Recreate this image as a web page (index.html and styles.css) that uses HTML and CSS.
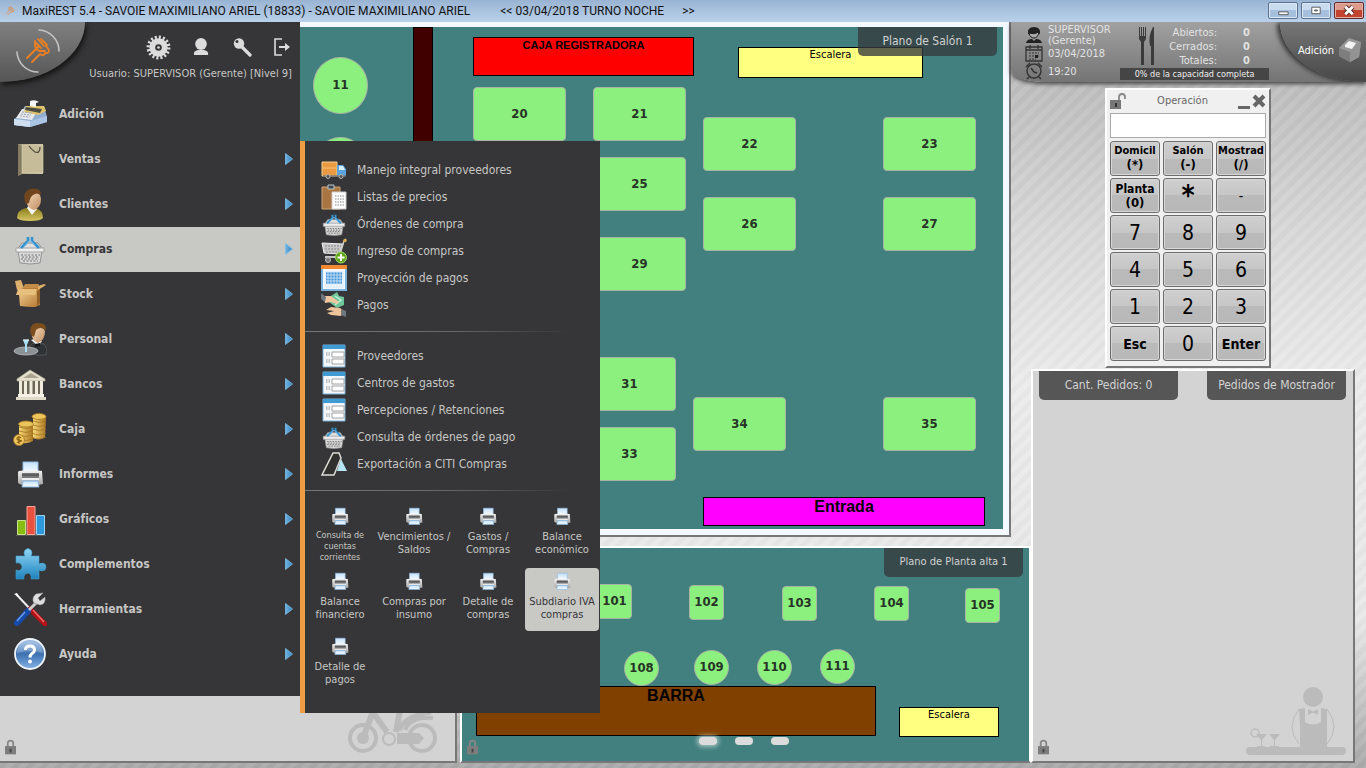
FILE: index.html
```html
<!DOCTYPE html>
<html lang="es">
<head>
  <meta charset="UTF-8">
  <title>MaxiREST 5.4</title>
  <link rel="stylesheet" href="styles.css">
</head>
<body>
  <!-- iconos -->
  <svg class="defs" aria-hidden="true">
    <defs>
      <linearGradient id="gBlue" x1="0" y1="0" x2="0" y2="1"><stop offset="0" stop-color="#8fd6f6"/><stop offset="1" stop-color="#1f83bd"/></linearGradient>
      <linearGradient id="gSky" x1="0" y1="0" x2="0" y2="1"><stop offset="0" stop-color="#c4e2fb"/><stop offset="1" stop-color="#fafdff"/></linearGradient>
      <linearGradient id="gArrow" x1="0" y1="0" x2="1" y2="0"><stop offset="0" stop-color="#6fb2e0"/><stop offset="1" stop-color="#3486c4"/></linearGradient>
      <linearGradient id="gPaper" x1="0" y1="0" x2="1" y2="0"><stop offset="0" stop-color="#9d947a"/><stop offset="1" stop-color="#cfc5a3"/></linearGradient>
      <linearGradient id="gSilver" x1="0" y1="0" x2="0" y2="1"><stop offset="0" stop-color="#f5f5f5"/><stop offset="1" stop-color="#a5a5a5"/></linearGradient>
      <linearGradient id="gGold" x1="0" y1="0" x2="1" y2="0"><stop offset="0" stop-color="#f6d877"/><stop offset="1" stop-color="#ab7620"/></linearGradient>
      <linearGradient id="gHelp" x1="0" y1="0" x2="0" y2="1"><stop offset="0" stop-color="#9dbfe6"/><stop offset=".5" stop-color="#3c70b0"/><stop offset="1" stop-color="#85b4e4"/></linearGradient>
      <linearGradient id="gSkin" x1="0" y1="0" x2="1" y2="1"><stop offset="0" stop-color="#f6dcbd"/><stop offset="1" stop-color="#c08c60"/></linearGradient>
      <linearGradient id="gShirt" x1="0" y1="0" x2="0" y2="1"><stop offset="0" stop-color="#8a7c1d"/><stop offset="1" stop-color="#d7c765"/></linearGradient>
      <linearGradient id="gBox" x1="0" y1="0" x2="1" y2="1"><stop offset="0" stop-color="#efc98b"/><stop offset="1" stop-color="#b67c36"/></linearGradient>
    </defs>
    <symbol id="arrow" viewBox="0 0 8 12"><path d="M.5.5 7.5 6 .5 11.5z" fill="url(#gArrow)" stroke="#7dbce6" stroke-width=".8"/></symbol>
    <symbol id="logo" viewBox="0 0 46 46">
      <g fill="none" stroke-linecap="round" stroke-linejoin="round">
        <path d="M24 2a21 21 0 0 1 20 21M2 24a21 21 0 0 0 21 20" stroke="#c4c4c4" stroke-width="1.6"/>
        <path d="M12 30 23 19M17 34l8-8q4 3 5-1 4 1 4-3l-3-4M20 13v5q1 4 5 5h5M23 11l6 7M20 14l6 6M26 11l6 6" stroke="#f0801f" stroke-width="1.8"/>
      </g>
    </symbol>
    <symbol id="gear" viewBox="0 0 24 24">
      <circle cx="12" cy="12" r="9.5" fill="none" stroke="#dcdcdc" stroke-width="4" stroke-dasharray="1.9 1.83"/>
      <circle cx="12" cy="12" r="8.800" fill="#dcdcdc"/><circle cx="12" cy="12" r="3.200" fill="#363638"/><circle cx="12" cy="12" r="1.300" fill="#dcdcdc"/>
    </symbol>
    <symbol id="user" viewBox="0 0 18 20"><ellipse cx="9" cy="7" rx="5.8" ry="6" fill="#dcdcdc"/><path d="M2 18q-1-4 4-5h6q5 1 4 5z" fill="#dcdcdc"/></symbol>
    <symbol id="key" viewBox="0 0 20 20"><path d="m9 9 9 9" stroke="#dcdcdc" stroke-width="3.2" stroke-linecap="round"/><circle cx="7" cy="6.5" r="5.2" fill="#dcdcdc"/><circle cx="5" cy="4.5" r="1.5" fill="#363638"/></symbol>
    <symbol id="exit" viewBox="0 0 18 20"><path d="M9 2H2v16h7" fill="none" stroke="#dcdcdc" stroke-width="1.6"/><path d="M6 9h6V6l5 4-5 4v-3H6z" fill="#dcdcdc"/></symbol>

    <symbol id="caja-reg" viewBox="0 0 34 34">
      <path d="M6 19 12 9h19l3 11v5l-17 5-16-2v-6z" fill="#92aed0"/>
      <path d="M1 22l16 2 17-5v6l-17 5-16-2z" fill="#a9c4e4"/><path d="M1 22l16 2v6L1 28z" fill="#cfdff0"/>
      <path d="M3 21 9 12l15 2-5 9z" fill="#e8eaec"/>
      <path d="M13 9h18l2 5-8 4-14-3z" fill="#dfc36b"/><path d="M13 10l16 2-2 4-15-3z" fill="#4c4d42"/>
      <path d="M17 9V4q5-2 9 1l-3 1v4z" fill="#f3f5f7"/>
      <g stroke="#a3acb5" stroke-width="1.2" stroke-dasharray="2 1"><path d="m9 15 10 1M8 17l10 1M7 19l10 1"/></g>
    </symbol>
    <symbol id="bolsa" viewBox="0 0 34 34">
      <path d="M5 2h25v30H9l-4 2z" fill="url(#gPaper)"/><path d="M5 2 9 4v27l-4 3z" fill="#847b61"/><path d="M9 3h21v28H9z" fill="#c6bc99" stroke="#dcd3b5" stroke-width=".6"/>
      <path d="M16 4q2 3 6 6 5 2 5-5" fill="none" stroke="#504c40" stroke-width="1.3"/>
    </symbol>
    <symbol id="cliente" viewBox="0 0 34 34">
      <path d="M4 31q0-8 9-10h9q8 2 8 10-2 3-13 3T4 31z" fill="url(#gShirt)"/>
      <path d="m14 21 5 7 5-6-2-4h-6z" fill="#f5f5f1"/>
      <path d="M13 11q1-6 8-6 7 1 7 7 0 9-7 11-5-1-7-6z" fill="url(#gSkin)"/>
      <path d="M12 15q-3-10 5-13 11-2 11 6-4-3-8 0-3 2-4 8l-3 1z" fill="#71451d"/>
    </symbol>
    <symbol id="canasta" viewBox="0 0 34 34">
      <path d="M4 18 9 11h16l5 7z" fill="#dedede" stroke="#929292"/><path d="M5 19h24l-2 12q-10 2-20 0z" fill="#dadada" stroke="#939393"/>
      <path d="M3 16h28v4H3z" fill="#eee" stroke="#a3a3a3"/>
      <path d="M8 23h19M9 25h17M8 27h18M10 29h15" stroke="#6f6f6f" stroke-width="1.2" stroke-dasharray="2 1.5"/>
      <path d="m8 16 7-7V5M26 16 19 9V5" stroke="#3492cf" stroke-width="2.6" fill="none"/><path d="m11 15 6-7 6 7" stroke="#8ac5eb" fill="none"/>
    </symbol>
    <symbol id="caja-carton" viewBox="0 0 34 34">
      <path d="M6 11h21v17l-5 2-15-1z" fill="#b77e39"/><path d="M6 15h18v14l-4 1-13-1z" fill="url(#gBox)"/><path d="m24 15 3-4v15l-3 3z" fill="#936128"/>
      <path d="m2 4 6-1 3 8-7 2z" fill="#ddb06c"/><path d="M12 7h14l-1 4H10z" fill="#c48c47"/><path d="m25 13 8-5-2-1-6 2z" fill="#dcae6a"/><path d="M5 12h19l-2 6H3z" fill="#e9bf7e"/>
    </symbol>
    <symbol id="mozo" viewBox="0 0 34 34">
      <path d="M15 31q0-9 7-10l9 1q4 4 3 10-5 3-19-1z" fill="#303336" stroke="#777" stroke-width=".5"/><path d="m18 18 7 6 4-5-5-3z" fill="#eee"/><path d="m22 22 5-1v3l-5 1z" fill="#17181a"/>
      <path d="M20 8q8-6 12 1 0 9-7 12-5-2-6-7z" fill="url(#gSkin)"/><path d="M18 13q-3-10 5-12 11-1 10 7-6-4-10 0l-2 7z" fill="#7c4e1e"/>
      <ellipse cx="13" cy="29" rx="12" ry="4" fill="#8c9195" stroke="#d4d7da" stroke-width=".6"/><path d="M10 18h6l-2 5v7h-2v-7z" fill="#a7def3"/><path d="M10 18h6" stroke="#e9faff" stroke-width="1.2"/>
    </symbol>
    <symbol id="banco" viewBox="0 0 34 34">
      <path d="M4 12 17 3l15 9v2H4z" fill="#e6e1cf" stroke="#ada892" stroke-width=".7"/><path d="m10 11 8-5 8 5z" fill="#a9a38f"/><path d="M6 14h24v14H6z" fill="#6d6858"/>
      <path d="M7.500 14v14M12.500 14v14M18 14v14M23.500 14v14M28.500 14v14" stroke="#efebdd" stroke-width="3"/><path d="M5 27h26v3H5z" fill="#f5f1e4"/><path d="M3 30h30v3H3z" fill="#e0dbc9"/>
    </symbol>
    <symbol id="monedas" viewBox="0 0 34 34">
      <path d="M20 5v21q6 3 12-1l1-20z" fill="url(#gGold)"/><path d="M6 12v18q7 3 14-1V12z" fill="url(#gGold)"/>
      <g fill="#edc65b" stroke="#a67625" stroke-width=".8"><path d="M19 21q7 4 14 0M19 25q7 4 14 0M20 17q6 3 13 0M20 13q6 3 13 0M20 9q6 3 13 0M6 15q7 3 14 0M6 19q7 3 14 0M6 23q7 3 14 0M6 27q7 3 14 0" fill="none"/><ellipse cx="26" cy="4.500" rx="7" ry="3"/><ellipse cx="13" cy="12" rx="7.500" ry="3"/><circle cx="6" cy="28" r="5.500"/></g>
      <path d="M8 25.500q-4-1-4 1t3.500 2-3.500 2M6 24v8" fill="none" stroke="#8d6115" stroke-width="1.100"/>
    </symbol>
    <symbol id="impresora" viewBox="0 0 34 34">
      <path d="M10 5h15v11H10z" fill="url(#gSky)" stroke="#91bbe2"/><path d="M6 14q12-2 23 0l1 13q-4 1-7 1H11q-4 0-6-2V15z" fill="url(#gSilver)"/>
      <path d="M9 16h17v6H9z" fill="#77797b"/><path d="M9 18h17" stroke="#555" stroke-width="1.5"/><path d="M10 24h15l1 6H9z" fill="url(#gSky)" stroke="#83b3df"/><path d="M9 22h17" stroke="#efefef" stroke-width="2"/>
    </symbol>
    <symbol id="grafico" viewBox="0 0 34 34">
      <path d="M4.500 18.500h8v14h-8z" fill="#87bd10" stroke="#cbe08c"/><path d="M14 4.500h8v28h-8z" fill="#e8513e" stroke="#f5a79d"/><path d="M23.500 13.500h8v19h-8z" fill="#2e9add" stroke="#a0d2f3"/><path d="M3 33.500h30" stroke="#555"/>
    </symbol>
    <symbol id="puzzle" viewBox="0 0 34 34">
      <path d="M3 9h9q-2-3 0-6 3-3 6 0 2 3 0 6h8v8q3-2 6 0 2 3 0 6-3 2-6 0v9h-8q1-5-3-6-5 1-4 6H3v-9q5 2 6-3-1-5-6-4z" fill="url(#gBlue)" stroke="#3f9fcc" stroke-width=".6"/>
    </symbol>
    <symbol id="tools" viewBox="0 0 34 34">
      <path d="m3 2 16 17" stroke="#eee" stroke-width="2"/><path d="m1 2 3-1 2 4z" fill="#fff"/><path d="m17 17 15 15" stroke="#b41218" stroke-width="5" stroke-linecap="round"/><path d="m20 18 11 12" stroke="#ef7572" stroke-width="1.200"/>
      <path d="m15 19-11 12" stroke="#154aa8" stroke-width="6" stroke-linecap="round"/><path d="M12 20 4 29" stroke="#6d9be7" stroke-width="1.500"/><path d="m16 18 8-8" stroke="#cfcfcf" stroke-width="3"/>
      <path d="M21 11q-3-5 2-9l7-1-5 5 2 3 5-4q1 7-5 8z" fill="#dedede" stroke="#9a9a9a" stroke-width=".6"/>
    </symbol>
    <symbol id="ayuda" viewBox="0 0 34 34">
      <circle cx="17" cy="17" r="15" fill="url(#gHelp)" stroke="#eef4fb" stroke-width="1.800"/><path d="M4 16Q5 4 17 4t13 12q-12-4-26 0z" fill="#fff" opacity=".22"/>
      <path d="M12.500 13q0-4 4.500-4t4.500 4q0 2-2.500 3.500-2 1.500-2 4" fill="none" stroke="#fff" stroke-width="3"/><circle cx="17" cy="24.500" r="1.900" fill="#fff"/>
    </symbol>

    <symbol id="camion" viewBox="0 0 26 26"><path d="M1 5h15v14H1z" fill="#ea9b42" stroke="#f9ce8d"/><path d="M2 11h13" stroke="#f8c37b"/><path d="M16 8h6l3 4v7h-9z" fill="#57a4df"/><path d="M18 9h4l2 4h-6z" fill="#d9effc"/><path d="M2 19h23" stroke="#777" stroke-width="1.500"/><g fill="#555" stroke="#b5b5b5"><circle cx="7" cy="19.500" r="2"/><circle cx="20" cy="19.500" r="2"/></g></symbol>
    <symbol id="lista" viewBox="0 0 26 26"><path d="M1 3h18v22H1z" fill="#a87543" stroke="#cfa575"/><path d="M7 1h6v4H7z" fill="#3e4750" stroke="#bfc6ca"/><path d="M11 8h14v17H11z" fill="#fff" stroke="#ccc"/><path d="M14 12h9M14 15h9M14 18h9M14 21h9" stroke="#888" stroke-dasharray="1.500 1"/></symbol>
    <symbol id="carrito" viewBox="0 0 26 26"><path d="m1 5 2 10 16 1 3-10z" fill="#c7c7c7" stroke="#eee"/><path d="M4 8h16M4 11h15M5 14h14" stroke="#8a8a8a" stroke-dasharray="2 1"/><path d="m19 16 4-13 2-2" fill="none" stroke="#ccc" stroke-width="1.500"/><circle cx="24" cy="2.500" r="1.700" fill="#dba84d"/><path d="M4 19h14" stroke="#c4c4c4" stroke-width="2"/><circle cx="7" cy="22" r="2.500" fill="#777" stroke="#bbb"/><circle cx="20" cy="19.500" r="5.500" fill="#5fa719" stroke="#a4d969"/><path d="M20 16v7M16.500 19.500h7" stroke="#fff" stroke-width="2"/></symbol>
    <symbol id="calendario" viewBox="0 0 26 26"><path d="M1 2h24v23H1z" fill="#f1f7fc" stroke="#78b4dd" stroke-width="2"/><path d="M0 0h26v4H0z" fill="#f18a30"/><path d="M5 7h16v12H5z" fill="#4596db"/><path d="M4 7h18M4 10h18M4 13h18M4 16h18M4 19h18M4 22h18M7 6v17M10 6v17M13 6v17M16 6v17M19 6v17M22 6v17" stroke="#d8eaf7" stroke-width=".8"/></symbol>
    <symbol id="pago" viewBox="0 0 26 26"><path d="m10 4 6-4 2 4 5 1v8l-7 3-8-6z" fill="#6dc79a"/><path d="m14 4 6 4-6 5" fill="none" stroke="#c3efd7" stroke-width="1.500"/><path d="m2 4 8 0 8 6-2 2-6-2-6 1z" fill="#f0c69f"/><path d="m0 1 5 4-1 5-4-3z" fill="#6d757d"/><path d="m5 18 5-3 9 1 4 3-3 5-10-1-4-2 7-2z" fill="#efc49b"/><path d="m20 17 5 2v6l-5-2z" fill="#71777e"/></symbol>
    <symbol id="ficha" viewBox="0 0 26 26"><path d="M2 2h22v22H2z" fill="#f4f7f9" stroke="#76b0d7"/><path d="M2 2h22v4H2z" fill="#409bd3"/><path d="M11 9h12v5H11zM11 16h12v5H11z" fill="#fff" stroke="#a2a2a2"/><path d="M5 10h5M5 12h5M5 17h5M5 19h5" stroke="#8d8d8d" stroke-dasharray="1.500 1"/></symbol>
    <symbol id="citi" viewBox="0 0 26 26"><path d="m20 8 6 12h-10z" fill="#b5e6f5"/><path d="m12 2 6 0 2 5-7 17H1z" fill="#30312e" stroke="#deded7" stroke-width="1.500"/></symbol>

    <symbol id="lock" viewBox="0 0 12 16"><path d="M3 8V4q0-3 3-3t3 3v4" fill="none" stroke="#888" stroke-width="2"/><path d="M0 7h12v9H0z" fill="#7d7d7d"/><path d="M5 10h2v4H5z" fill="#444"/></symbol>
    <symbol id="unlock" viewBox="0 0 17 16"><path d="M9 8V4q0-3 3-3t3 3v2" fill="none" stroke="#888" stroke-width="1.800"/><path d="M0 7h11v9H0z" fill="#777"/><path d="M5 10h2v4H5z" fill="#333"/></symbol>
    <symbol id="cubiertos" viewBox="0 0 18 40"><path d="M1 1h1v9h1V1h1v9h1V1h1v9h1V1h1v12l-2 3v23H3V16l-2-3zM15 1q-5 9-3 19h1v19h3V1z" fill="#3b3b3b"/></symbol>
    <symbol id="camarero" viewBox="0 0 18 18"><path d="M3 8q-1-7 6-7t6 7H3z" fill="#222"/><path d="M4 7q5 2 10-1-1 6-5 6T4 7z" fill="#aaa" stroke="#222"/><path d="M1 17q1-4 6-4l2 2 2-2q5 0 6 4z" fill="#222"/></symbol>
    <symbol id="fecha" viewBox="0 0 18 18"><path d="M1 3h16v14H1zM5 1v4M13 1v4M1 6h16" fill="none" stroke="#333" stroke-width="1.300"/><path d="M4 9h10M4 12h10M4 15h7" stroke="#333" stroke-dasharray="2 1"/><path d="M10 11h3v3h-3z" fill="#222"/></symbol>
    <symbol id="reloj" viewBox="0 0 18 18"><circle cx="9" cy="9" r="7" fill="none" stroke="#333" stroke-width="1.400"/><path d="m6 6 3 4 3 1M1 5l4-4M17 5l-4-4M4 15l-2 2M14 15l2 2" stroke="#333" stroke-width="1.500" fill="none"/></symbol>
    <symbol id="ticket" viewBox="0 0 24 26"><path d="m1 11 10-10 12 4-2 15-9 5L1 19z" fill="#999"/><path d="m1 11 11 4 11-10-2 15-9 5L1 19z" fill="#7e7e7e"/><path d="m12 15 11-10-2 15-9 5z" fill="#939393"/><path d="m7 8 4-4 7 2-4 6-7-2z" fill="#f3f3f3"/></symbol>
  </svg>

  <header class="titlebar">
    <svg class="title-icon"><use href="#logo"/></svg>
    <span class="title-text">MaxiREST 5.4 - SAVOIE MAXIMILIANO ARIEL (18833) - SAVOIE MAXIMILIANO ARIEL</span>
    <span class="title-shift">&lt;&lt; 03/04/2018 TURNO NOCHE</span>
    <span>&gt;&gt;</span>
    <div class="window-buttons">
      <button type="button" aria-label="Minimizar"><svg viewBox="0 0 30 16"><path d="M10.500 9.500h10v3h-10z" fill="#fff" stroke="#555"/></svg></button>
      <button type="button" aria-label="Restaurar"><svg viewBox="0 0 30 16"><path d="M10.500 4.500h9v7h-9z" fill="#fff" stroke="#555"/><path d="M13.500 7.500h3v1h-3z" fill="#9bb" stroke="#555"/></svg></button>
      <button type="button" class="close" aria-label="Cerrar"><svg viewBox="0 0 30 16"><path d="m11 4 8 8m0-8-8 8" stroke="#5a3030" stroke-width="5"/><path d="m11 4 8 8m0-8-8 8" stroke="#fff" stroke-width="3"/></svg></button>
    </div>
  </header>

  <main class="desktop">
    <section class="window salon">
      <div class="plano">
        <div class="bloque muro"></div>
        <div class="bloque caja-registradora">CAJA REGISTRADORA</div>
        <div class="bloque escalera">Escalera</div>
        <div class="bloque entrada">Entrada</div>
        <button type="button" class="mesa redonda m11">11</button>
        <button type="button" class="mesa redonda m12">12</button>
        <button type="button" class="mesa m20">20</button>
        <button type="button" class="mesa m21">21</button>
        <button type="button" class="mesa m22">22</button>
        <button type="button" class="mesa m23">23</button>
        <button type="button" class="mesa m25">25</button>
        <button type="button" class="mesa m26">26</button>
        <button type="button" class="mesa m27">27</button>
        <button type="button" class="mesa m29">29</button>
        <button type="button" class="mesa m31">31</button>
        <button type="button" class="mesa m33">33</button>
        <button type="button" class="mesa m34">34</button>
        <button type="button" class="mesa m35">35</button>
        <h2 class="tab">Plano de Salón 1</h2>
      </div>
    </section>

    <section class="window delivery">
      <svg class="candado"><use href="#lock"/></svg>
      <svg class="moto" viewBox="0 0 90 46">
        <g fill="none" stroke="#bbb"><circle cx="16" cy="28" r="13" stroke-width="4"/><circle cx="75" cy="28" r="13" stroke-width="4"/><path d="m16 28 9-24M24 0l16 22M49 22l4-22" stroke-width="6"/><path d="M58 20Q64 6 86 8" stroke-width="4"/><circle cx="42" cy="29" r="6" stroke-width="2"/></g>
        <circle cx="16" cy="28" r="6" fill="#bbb"/><path d="M50 23h22l5 5-5 6H50z" fill="#bbb"/><path d="M52 20Q58 6 84 2" fill="none" stroke="#bbb" stroke-width="5"/>
      </svg>
    </section>

    <section class="window planta">
      <div class="plano">
        <div class="bloque barra">BARRA</div>
        <div class="bloque escalera">Escalera</div>
        <button type="button" class="mesa chica m101">101</button>
        <button type="button" class="mesa chica m102">102</button>
        <button type="button" class="mesa chica m103">103</button>
        <button type="button" class="mesa chica m104">104</button>
        <button type="button" class="mesa chica m105">105</button>
        <button type="button" class="mesa chica redonda m108">108</button>
        <button type="button" class="mesa chica redonda m109">109</button>
        <button type="button" class="mesa chica redonda m110">110</button>
        <button type="button" class="mesa chica redonda m111">111</button>
        <h2 class="tab">Plano de Planta alta 1</h2>
        <svg class="candado"><use href="#lock"/></svg>
        <div class="paginas">
          <button type="button" class="activa" aria-label="Plano 1"></button>
          <button type="button" aria-label="Plano 2"></button>
          <button type="button" aria-label="Plano 3"></button>
        </div>
      </div>
    </section>

    <section class="window pedidos">
      <h2 class="tab">Cant. Pedidos: 0</h2>
      <h2 class="tab">Pedidos de Mostrador</h2>
      <svg class="candado"><use href="#lock"/></svg>
      <svg class="barman" viewBox="0 0 100 68">
        <g fill="#bbb"><circle cx="67" cy="10" r="10"/><path d="M53 22l6-1v14q8 5 16 0V21l6 1v38H54V40z"/><path d="m62 22 5 2.500 5-2.500v6l-5-2.500-5 2.500z"/><rect y="60" width="100" height="8" rx="4"/><path d="M10 47h11l-5 6v6h3v1h-8v-1h4v-6zM23 47h11l-5 6v6h4v1h-9v-1h4v-6z"/></g>
        <g fill="none" stroke="#bbb"><circle cx="9" cy="46" r="4" stroke-width="1.500"/><path d="M53 22Q39 40 53 57M81 22q14 18 0 35"/></g>
      </svg>
    </section>

    <section class="window operacion">
      <div class="op-head">
        <svg class="op-lock"><use href="#unlock"/></svg>
        <h2>Operación</h2>
        <button type="button" class="op-min" aria-label="Minimizar"></button>
        <button type="button" class="op-close" aria-label="Cerrar"><svg viewBox="0 0 14 14"><path d="m2 2 10 10M12 2 2 12" stroke="#666" stroke-width="4"/></svg></button>
      </div>
      <input type="text" class="op-input" aria-label="Operación">
      <div class="teclado">
        <button type="button" class="funcion">Domicil<br><span>(*)</span></button>
        <button type="button" class="funcion">Salón<br><span>(-)</span></button>
        <button type="button" class="funcion">Mostrad<br><span>(/)</span></button>
        <button type="button" class="funcion planta-tecla">Planta<br><span>(0)</span></button>
        <button type="button" class="asterisco">*</button>
        <button type="button" class="guion">-</button>
        <button type="button">7</button>
        <button type="button">8</button>
        <button type="button">9</button>
        <button type="button">4</button>
        <button type="button">5</button>
        <button type="button">6</button>
        <button type="button">1</button>
        <button type="button">2</button>
        <button type="button">3</button>
        <button type="button" class="accion">Esc</button>
        <button type="button">0</button>
        <button type="button" class="accion">Enter</button>
      </div>
    </section>

    <section class="estado">
      <ul class="turno">
        <li><svg><use href="#camarero"/></svg><span>SUPERVISOR<br>(Gerente)</span></li>
        <li><svg><use href="#fecha"/></svg><span>03/04/2018</span></li>
        <li><svg><use href="#reloj"/></svg><span>19:20</span></li>
      </ul>
      <div class="capacidad">
        <div class="conteo">
          <svg><use href="#cubiertos"/></svg>
          <dl>
            <dt>Abiertos:</dt><dd>0</dd>
            <dt>Cerrados:</dt><dd>0</dd>
            <dt>Totales:</dt><dd>0</dd>
          </dl>
        </div>
        <p>0% de la capacidad completa</p>
      </div>
      <button type="button" class="adicion">Adición <svg><use href="#ticket"/></svg></button>
    </section>

    <nav class="menu">
      <div class="menu-head">
        <div class="marca"><svg><use href="#logo"/></svg></div>
        <div class="sesion">
          <div class="acciones">
            <button type="button" aria-label="Configuración"><svg><use href="#gear"/></svg></button>
            <button type="button" aria-label="Usuario"><svg><use href="#user"/></svg></button>
            <button type="button" aria-label="Clave"><svg><use href="#key"/></svg></button>
            <button type="button" aria-label="Salir"><svg><use href="#exit"/></svg></button>
          </div>
          <p>Usuario: SUPERVISOR (Gerente) [Nivel 9]</p>
        </div>
      </div>
      <ul class="menu-lista">
        <li><a href="#"><svg class="ico"><use href="#caja-reg"/></svg>Adición</a></li>
        <li><a href="#"><svg class="ico"><use href="#bolsa"/></svg>Ventas<svg class="flecha"><use href="#arrow"/></svg></a></li>
        <li><a href="#"><svg class="ico"><use href="#cliente"/></svg>Clientes<svg class="flecha"><use href="#arrow"/></svg></a></li>
        <li><a href="#" class="activo"><svg class="ico"><use href="#canasta"/></svg>Compras<svg class="flecha"><use href="#arrow"/></svg></a></li>
        <li><a href="#"><svg class="ico"><use href="#caja-carton"/></svg>Stock<svg class="flecha"><use href="#arrow"/></svg></a></li>
        <li><a href="#"><svg class="ico"><use href="#mozo"/></svg>Personal<svg class="flecha"><use href="#arrow"/></svg></a></li>
        <li><a href="#"><svg class="ico"><use href="#banco"/></svg>Bancos<svg class="flecha"><use href="#arrow"/></svg></a></li>
        <li><a href="#"><svg class="ico"><use href="#monedas"/></svg>Caja<svg class="flecha"><use href="#arrow"/></svg></a></li>
        <li><a href="#"><svg class="ico"><use href="#impresora"/></svg>Informes<svg class="flecha"><use href="#arrow"/></svg></a></li>
        <li><a href="#"><svg class="ico"><use href="#grafico"/></svg>Gráficos<svg class="flecha"><use href="#arrow"/></svg></a></li>
        <li><a href="#"><svg class="ico"><use href="#puzzle"/></svg>Complementos<svg class="flecha"><use href="#arrow"/></svg></a></li>
        <li><a href="#"><svg class="ico"><use href="#tools"/></svg>Herramientas<svg class="flecha"><use href="#arrow"/></svg></a></li>
        <li><a href="#"><svg class="ico"><use href="#ayuda"/></svg>Ayuda<svg class="flecha"><use href="#arrow"/></svg></a></li>
      </ul>
    </nav>

    <!-- submenú de Compras -->
    <nav class="submenu">
      <ul class="sub-lista">
        <li><a href="#"><svg><use href="#camion"/></svg>Manejo integral proveedores</a></li>
        <li><a href="#"><svg><use href="#lista"/></svg>Listas de precios</a></li>
        <li><a href="#"><svg><use href="#canasta"/></svg>Órdenes de compra</a></li>
        <li><a href="#"><svg><use href="#carrito"/></svg>Ingreso de compras</a></li>
        <li><a href="#"><svg><use href="#calendario"/></svg>Proyección de pagos</a></li>
        <li><a href="#"><svg><use href="#pago"/></svg>Pagos</a></li>
      </ul>
      <hr>
      <ul class="sub-lista">
        <li><a href="#"><svg><use href="#ficha"/></svg>Proveedores</a></li>
        <li><a href="#"><svg><use href="#ficha"/></svg>Centros de gastos</a></li>
        <li><a href="#"><svg><use href="#ficha"/></svg>Percepciones / Retenciones</a></li>
        <li><a href="#"><svg><use href="#canasta"/></svg>Consulta de órdenes de pago</a></li>
        <li><a href="#"><svg><use href="#citi"/></svg>Exportación a CITI Compras</a></li>
      </ul>
      <hr>
      <ul class="reportes">
        <li><a href="#" class="largo"><svg><use href="#impresora"/></svg>Consulta de<br>cuentas<br>corrientes</a></li>
        <li><a href="#"><svg><use href="#impresora"/></svg>Vencimientos /<br>Saldos</a></li>
        <li><a href="#"><svg><use href="#impresora"/></svg>Gastos /<br>Compras</a></li>
        <li><a href="#"><svg><use href="#impresora"/></svg>Balance<br>económico</a></li>
        <li><a href="#"><svg><use href="#impresora"/></svg>Balance<br>financiero</a></li>
        <li><a href="#"><svg><use href="#impresora"/></svg>Compras por<br>insumo</a></li>
        <li><a href="#"><svg><use href="#impresora"/></svg>Detalle de<br>compras</a></li>
        <li><a href="#" class="activo"><svg><use href="#impresora"/></svg>Subdiario IVA<br>compras</a></li>
        <li><a href="#"><svg><use href="#impresora"/></svg>Detalle de<br>pagos</a></li>
      </ul>
    </nav>
  </main>
</body>
</html>
```
FILE: styles.css
```css
* { box-sizing: border-box; }
body { margin: 0; min-height: 100vh; display: flex; flex-direction: column; font-family: "DejaVu Sans Condensed", "DejaVu Sans", sans-serif; font-size: 12px; overflow: hidden; }
ul, dl, dd, p, h2 { margin: 0; padding: 0; list-style: none; font-size: inherit; font-weight: normal; }
a { color: inherit; text-decoration: none; }
button { font-family: inherit; padding: 0; border: none; background: none; cursor: pointer; }
svg { display: block; }
.defs { position: absolute; width: 0; height: 0; }

/* barra de título */
.titlebar { display: flex; align-items: center; height: 22px; padding-left: 2px; background: linear-gradient(#99b4d3, #bad1ea); font-family: Roboto, "Open Sans", sans-serif; font-size: 12px; color: #111; white-space: pre; }
.title-icon { width: 16px; height: 16px; margin-right: 4px; }
.title-text { margin-right: 30px; }
.title-shift { margin-right: 18px; }
.window-buttons { display: flex; gap: 3px; margin-left: auto; margin-right: 2px; align-self: flex-start; padding-top: 2px; }
.window-buttons button { width: 30px; height: 17px; border: 1px solid #5b7390; border-radius: 2px; background: linear-gradient(#c9dbee 50%, #a5bfdc 50%); box-shadow: inset 0 0 0 1px #dbe8f5; }
.window-buttons .close { background: linear-gradient(#dc9a8b 50%, #c0442f 50%); border-color: #632b2b; box-shadow: inset 0 0 0 1px #e5b1a6; }

/* escritorio */
.desktop { position: relative; flex: 1; overflow: hidden; background: repeating-linear-gradient(135deg, rgba(255,255,255,.06) 0 5px, rgba(0,0,0,.02) 5px 10px), linear-gradient(#bdbdbd 8%, #d8d8d8 28%, #ebebeb 48%, #e8e8e8 80%, #a9a9a9); }
.window { position: absolute; border: 2px solid #fff; border-right-color: #777; border-bottom-color: #777; background: #d3d3d3; }
.plano { position: relative; height: 100%; overflow: hidden; background: #42807f; }
.salon { left: 0; right: 355px; top: 0; height: 515px; border: solid #777; border-width: 0 2px 2px 0; padding: 5px 6px 6px 0; background: #f4f8ff; }
.delivery { left: -2px; width: 459px; top: 524px; bottom: 5px; }
.planta { left: 460px; right: 335px; top: 524px; bottom: 5px; border-right-color: #fff; }
.pedidos { right: 11px; width: 324px; top: 347px; bottom: 5px; display: flex; justify-content: space-between; align-items: flex-start; padding: 0 7px 0 6px; }
.operacion { right: 95px; width: 166px; top: 66px; height: 280px; padding: 0 3px; background: #f0f0f0; }

.tab { width: 139px; height: 29px; line-height: 28px; border-radius: 0 0 5px 5px; background: #565657; color: #d2d2d2; text-align: center; white-space: nowrap; }
.plano .tab { position: absolute; right: 6px; top: 0; background: rgba(52,58,60,.78); }
.planta .tab { font-size: 11px; }
.candado { position: absolute; left: 5px; bottom: 6px; width: 11px; height: 16px; }
.moto { position: absolute; right: 18px; bottom: 5px; width: 90px; height: 46px; }
.barman { position: absolute; right: 7px; bottom: 6px; width: 100px; height: 68px; }
.paginas { position: absolute; left: 237px; bottom: 16px; display: flex; gap: 18px; }
.paginas button { width: 18px; height: 8px; border-radius: 4px; background: #dcdcdc; }
.paginas .activa { box-shadow: 0 0 4px 2px rgba(255,255,255,.5); }

/* planos: la posición de cada mesa */
.bloque { position: absolute; border: 1px solid #000; color: #000; text-align: center; overflow: hidden; }
.mesa { position: absolute; width: 93px; height: 54px; padding-bottom: 2px; border: 1px solid #a9b5a4; border-radius: 4px; background: #8cf07e; color: #263326; font-size: 13px; font-weight: bold; }
.chica { width: 35px; height: 35px; }
.redonda { border-radius: 50%; }
.muro { left: 413px; top: 0; width: 20px; height: 300px; background: #400000; }
.caja-registradora { left: 473px; top: 10px; width: 221px; height: 39px; background: #f00; font: bold 11px/14px "Liberation Sans", Arial, sans-serif; }
.escalera { background: #ffff80; font-size: 11px; line-height: 14px; }
.salon .escalera { left: 738px; top: 20px; width: 185px; height: 31px; }
.entrada { left: 703px; top: 470px; width: 282px; height: 29px; background: #f0f; font: bold 16px/18px "Liberation Sans", Arial, sans-serif; }
.m11 { left: 313px; top: 30px; width: 55px; height: 57px; }
.m12 { left: 313px; top: 110px; width: 55px; height: 57px; }
.m20 { left: 473px; top: 60px; }
.m21 { left: 593px; top: 60px; }
.m22 { left: 703px; top: 90px; }
.m23 { left: 883px; top: 90px; }
.m25 { left: 593px; top: 130px; }
.m26 { left: 703px; top: 170px; }
.m27 { left: 883px; top: 170px; }
.m29 { left: 593px; top: 210px; }
.m31 { left: 583px; top: 330px; }
.m33 { left: 583px; top: 400px; }
.m34 { left: 693px; top: 370px; }
.m35 { left: 883px; top: 370px; }
.barra { left: 14px; top: 138px; width: 400px; height: 50px; background: #804000; font: bold 16px/18px "Liberation Sans", Arial, sans-serif; }
.planta .escalera { left: 437px; top: 159px; width: 100px; height: 30px; }
.m101 { left: 135px; top: 36px; }
.m102 { left: 227px; top: 37px; }
.m103 { left: 320px; top: 38px; }
.m104 { left: 412px; top: 38px; }
.m105 { left: 503px; top: 40px; }
.m108 { left: 162px; top: 103px; }
.m109 { left: 232px; top: 102px; }
.m110 { left: 295px; top: 102px; }
.m111 { left: 358px; top: 101px; }

/* teclado de operación */
.op-head { display: flex; align-items: center; height: 23px; padding-bottom: 2px; color: #666; }
.op-head h2 { flex: 1; text-align: center; font-size: 11px; }
.op-lock { width: 17px; height: 16px; }
.op-min { width: 12px; height: 3px; background: #666; align-self: flex-end; margin-bottom: 2px; }
.op-close { width: 14px; height: 14px; margin-left: 2px; }
.op-input { display: block; width: 100%; height: 25px; border: 1px solid #aaa; background: #fff; }
.teclado { display: grid; grid-template-columns: repeat(3, 1fr); gap: 2px 3px; padding-top: 3px; }
.teclado button { height: 35px; border: 1px solid #6d6d6d; border-radius: 3px; background: linear-gradient(#cfcfcf, #c6c6c6 50%, #bababa 50%, #b8b8b8); box-shadow: inset 0 0 0 1px #d6d6d6; color: #000; font-size: 21px; line-height: 14px; overflow: hidden; white-space: nowrap; }
.teclado .funcion { font-size: 11px; font-weight: bold; }
.teclado .funcion span { font-size: 13px; }
.teclado .planta-tecla { font-size: 12px; }
.teclado .accion { font-size: 14px; font-weight: bold; }
.teclado .asterisco { font-size: 28px; font-weight: bold; line-height: 28px; }
.teclado .guion { font-size: 14px; }

/* estado del turno */
.estado { position: absolute; right: 0; top: 0; width: 355px; height: 60px; display: flex; background: linear-gradient(#a1a1a1, #747474); border-radius: 0 0 0 34px / 0 0 0 12px; box-shadow: 0 2px 4px #444; color: #e2e2e2; font-size: 11px; overflow: hidden; }
.turno { width: 109px; padding: 4px 0 0 14px; line-height: 11px; }
.turno li { display: flex; align-items: center; gap: 5px; height: 18px; }
.turno svg { width: 18px; height: 18px; flex: none; }
.capacidad { width: 150px; padding-top: 4px; }
.conteo { display: flex; height: 42px; }
.conteo svg { width: 18px; height: 40px; margin-left: 18px; }
.conteo dl { flex: 1; display: grid; grid-template-columns: 1fr 33px; line-height: 13px; padding-right: 20px; text-align: right; }
.conteo dd { font-weight: bold; }
.capacidad p { height: 12px; background: #454545; color: #eee; font-size: 9px; line-height: 12px; text-align: center; width: 149px; }
.adicion { flex: 1; display: flex; align-items: center; gap: 4px; margin-left: 10px; padding: 0 0 4px 18px; background: linear-gradient(#777, #474747); border-radius: 0 0 0 85px / 0 0 0 60px; box-shadow: -3px 1px 5px #333; color: #fff; font-size: 11px; white-space: nowrap; }
.adicion svg { width: 24px; height: 26px; flex: none; }

/* menú principal */
.menu { position: absolute; left: 0; top: 0; width: 300px; padding-bottom: 19px; background: #363638; color: #c6c6c4; }
.menu-head { display: flex; justify-content: space-between; height: 70px; }
.marca { width: 85px; height: 60px; padding: 6px 0 0 15px; border-radius: 0 0 85px 0 / 0 0 60px 0; background: linear-gradient(#808080, #555); box-shadow: 2px 3px 5px #151515; }
.marca svg { width: 46px; height: 46px; }
.sesion { flex: 1; padding: 12px 8px 0 0; font-size: 11px; text-align: right; white-space: nowrap; }
.acciones { display: flex; justify-content: space-between; width: 146px; height: 26px; margin: 0 0 7px auto; }
.acciones svg { width: 20px; height: 20px; }
.acciones button:first-child svg { width: 25px; height: 25px; }
.menu-lista a { display: flex; align-items: center; height: 45px; padding: 0 7px 2px 13px; font-size: 12px; font-weight: bold; }
.menu-lista .activo { background: #c8c8c5; color: #363638; }
.ico { width: 34px; height: 34px; margin-right: 12px; }
.flecha { width: 8px; height: 12px; margin-left: auto; }

/* submenú */
.submenu { position: absolute; left: 300px; top: 119px; width: 300px; height: 572px; border-left: 5px solid #ee9d45; padding-top: 15px; background: #363638; color: #c6c6c4; }
.sub-lista a { display: flex; align-items: center; gap: 10px; height: 27px; padding-left: 16px; }
.sub-lista svg { width: 26px; height: 26px; }
.submenu hr { height: 1px; margin: 13px 0 10px; border: none; background: linear-gradient(90deg, #777, #666 50%, #363638 90%); }
.reportes { display: grid; grid-template-columns: repeat(4, 74px); gap: 2px 0; margin-left: -2px; padding-top: 2px; }
.reportes a { display: block; height: 63px; padding-top: 2px; border-radius: 4px; font-size: 11px; line-height: 13px; text-align: center; white-space: nowrap; }
.reportes svg { width: 24px; height: 22px; margin: 0 auto 3px; }
.reportes .largo { font-size: 9px; line-height: 11px; }
.reportes .activo { background: #c8c8c5; color: #363638; }
```
